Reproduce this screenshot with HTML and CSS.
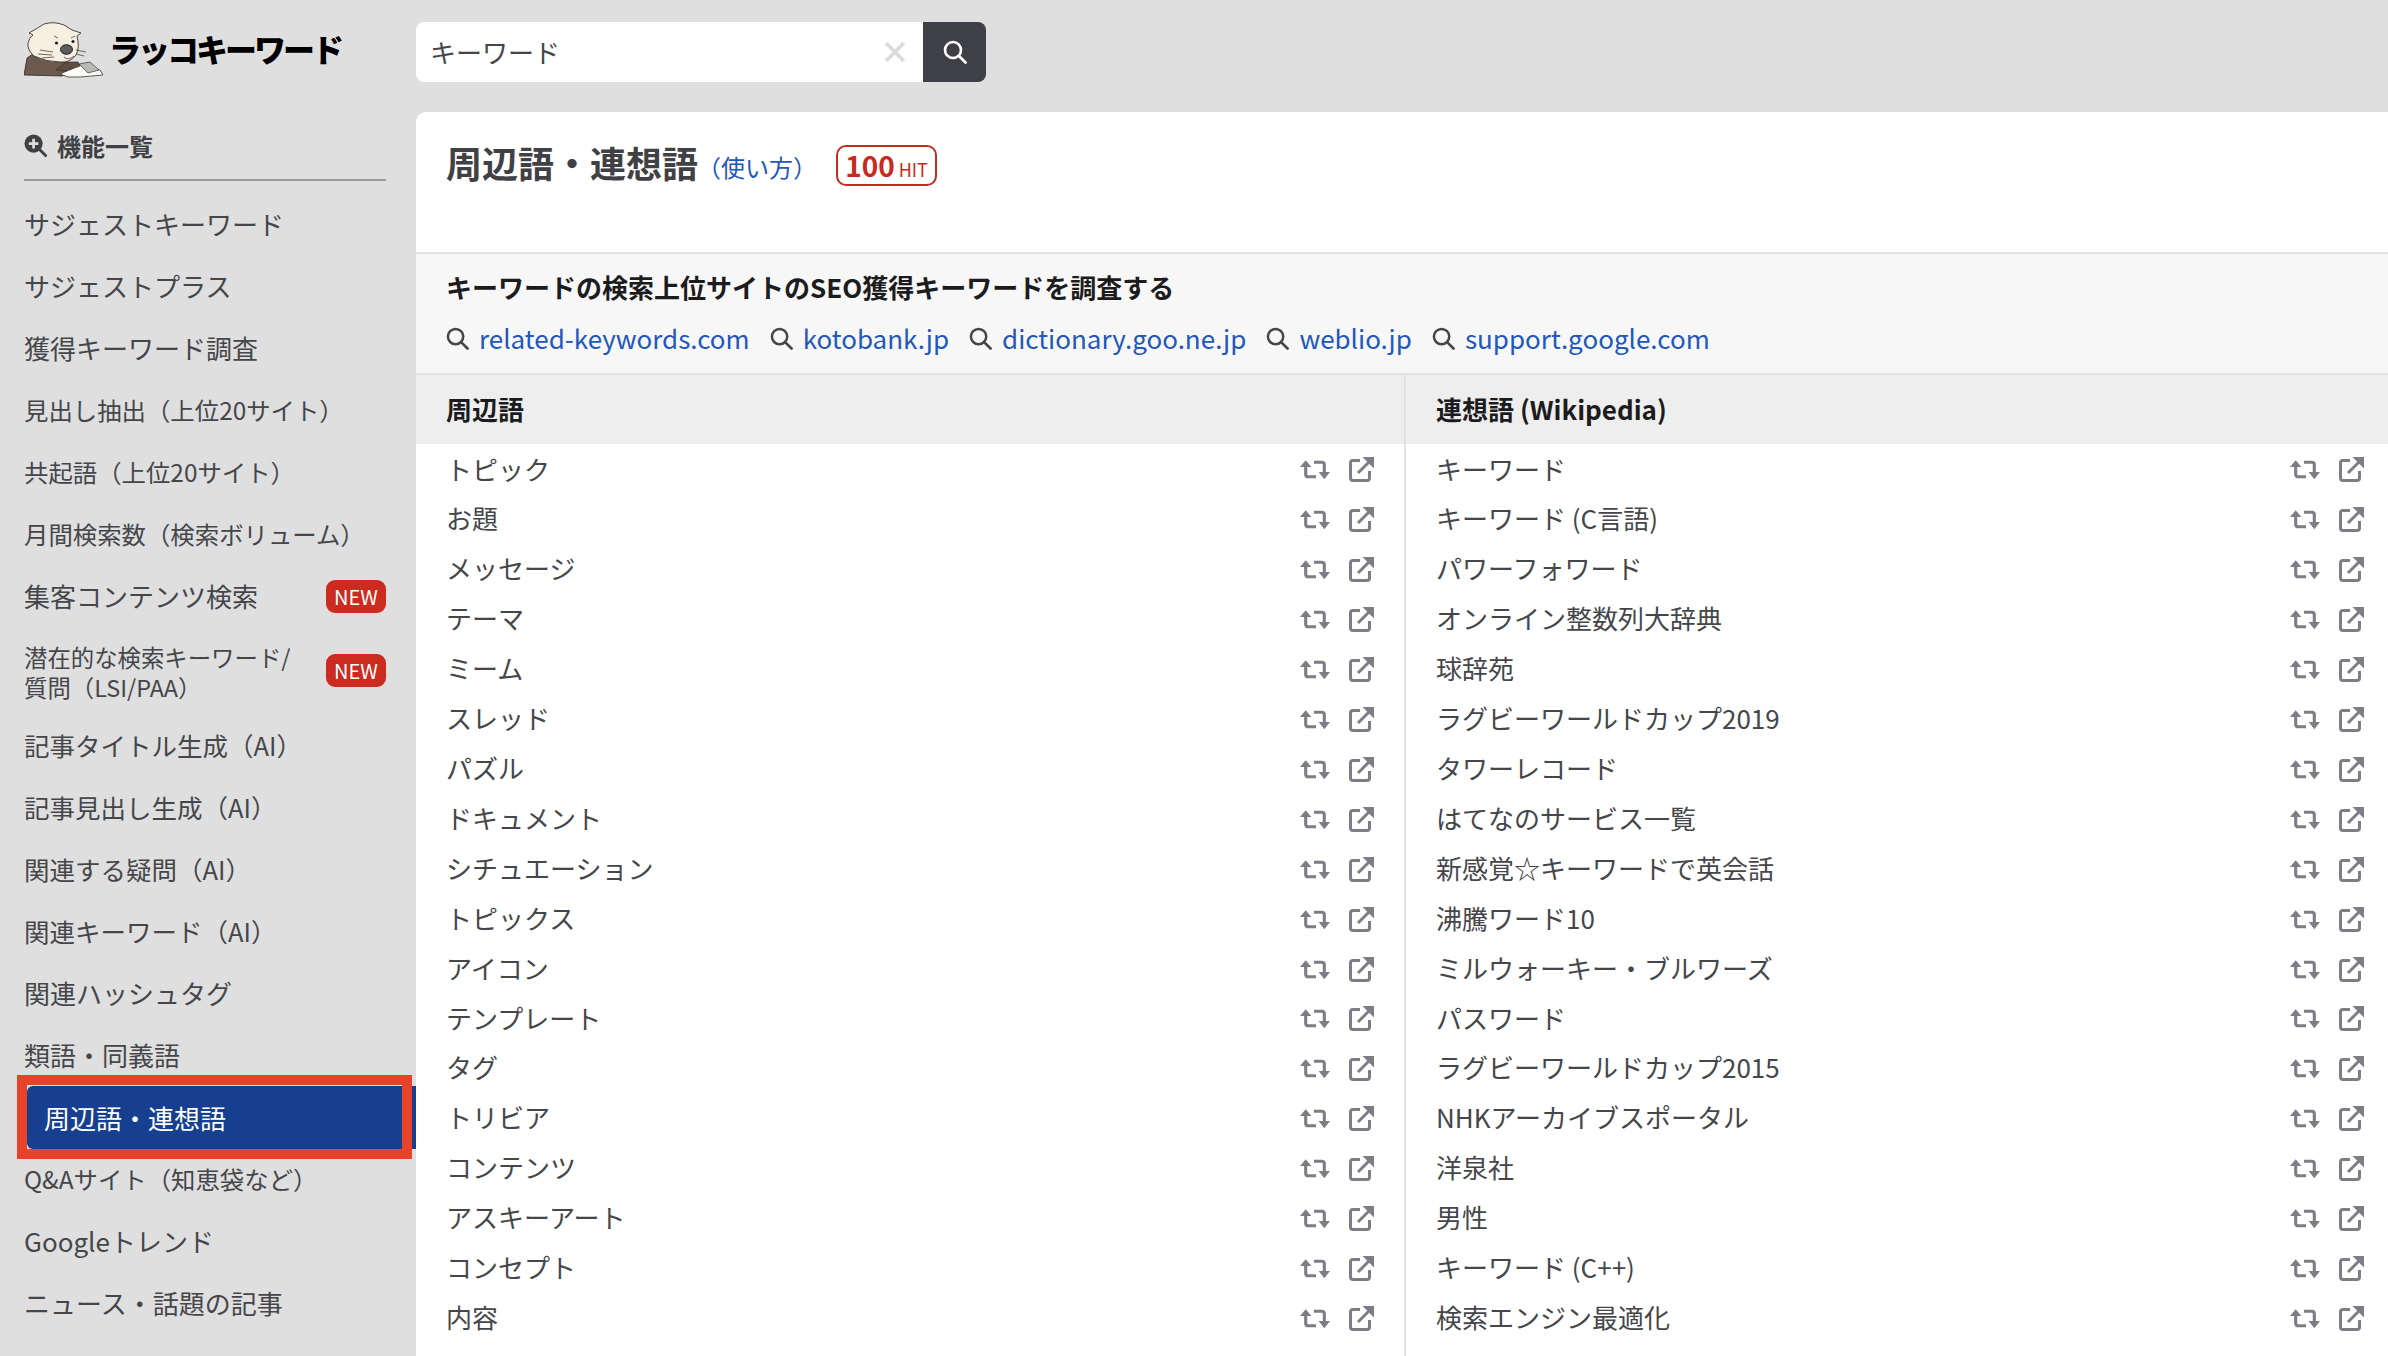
FILE: index.html
```html
<!DOCTYPE html>
<html lang="ja">
<head>
<meta charset="utf-8">
<title>周辺語・連想語 - ラッコキーワード</title>
<link rel="stylesheet" href="styles.css">
</head>
<body>
<svg class="defs" width="0" height="0" aria-hidden="true">
  <symbol id="rt" viewBox="0 0 29 20">
    <path d="M5.5 5V14.5Q5.5 17 8 17H15.5M13.5 3H21Q23.500 3 23.500 5.500V15" fill="none" stroke="currentColor" stroke-width="3"/>
    <path d="M0 7.500L5.500 1L11 7.500ZM18 12.500H29L23.500 19.500Z" fill="currentColor"/>
  </symbol>
  <symbol id="ext" viewBox="0 0 25 25">
    <path d="M11 3.500H4Q1.500 3.500 1.500 6V21Q1.500 23.500 4 23.500H18Q20.500 23.500 20.500 21V14" fill="none" stroke="currentColor" stroke-width="3"/>
    <path d="M9 16L20 5" fill="none" stroke="currentColor" stroke-width="3"/>
    <path d="M13.500 0H25V11.500Z" fill="currentColor"/>
  </symbol>
  <symbol id="lens" viewBox="0 0 24 24">
    <circle cx="10" cy="10" r="8" fill="none" stroke="currentColor" stroke-width="2.600"/>
    <path d="M16 16L22.500 22.500" fill="none" stroke="currentColor" stroke-width="2.800" stroke-linecap="round"/>
  </symbol>
</svg>

<header class="top">
  <a class="brand">
    <svg class="otter" viewBox="24 22 80 56" aria-hidden="true">
      <path d="M24 75L27 58L36 52L62 58L75 70L62 76Z" fill="#6b5a4d" stroke="#2e2a26" stroke-width=".8"/>
      <path d="M29 33L36 29L44 24Q54 21 64 25L72 30L81 33L77 36Q80 48 76 55Q70 63 60 62Q46 62 34 56Q27 50 28 43Q29 38 33 35Z" fill="#f6efe2" stroke="#3a3630" stroke-width=".9"/>
      <ellipse cx="66.500" cy="49.500" rx="6" ry="4.800" fill="#5c5c5c" stroke="#1e1e1e" stroke-width="1"/>
      <circle cx="56.500" cy="43" r="1.600" fill="#222"/>
      <circle cx="73" cy="41.500" r="1.600" fill="#222"/>
      <path d="M54 36L58 38M75 36L71 38M40 50L53 52M38 54L52 55M42 58L54 57M76 50L86 52M76 54L84 56M64 57Q68 61 74 56" fill="none" stroke="#4a4540" stroke-width=".8"/>
      <path d="M60 74L71 69L80 65L100 70L103 75L80 77L68 77Z" fill="#fbfaf6" stroke="#3a3630" stroke-width=".8"/>
      <path d="M79 64L90 62L99 70L88 73Z" fill="#b9b9b7" stroke="#3a3630" stroke-width=".7"/>
      <path d="M56 70L66 62L78 62L80 66L66 71Z" fill="#5e4e42" stroke="#2e2a26" stroke-width=".6"/>
    </svg>
    <span class="brand-name">ラッコキーワード</span>
  </a>
  <form class="search">
    <div class="search-field">
      <span class="search-text">キーワード</span>
      <svg class="search-clear" viewBox="0 0 20 20" aria-hidden="true"><path d="M2 2L18 18M18 2L2 18" stroke="currentColor" stroke-width="3.600" fill="none"/></svg>
    </div>
    <div class="search-btn"><svg class="search-icon" aria-hidden="true"><use href="#lens"/></svg></div>
  </form>
</header>

<div class="layout">
  <aside class="side">
    <div class="side-head">
      <svg class="side-icon" viewBox="0 0 24 24" aria-hidden="true">
        <circle cx="10" cy="10" r="9.500" fill="#3f4045"/>
        <path d="M10 5V15M5 10H15" stroke="#dfdfdf" stroke-width="2.800"/>
        <path d="M16 16L22.500 22.500" stroke="#3f4045" stroke-width="3" stroke-linecap="round"/>
      </svg>
      <span>機能一覧</span>
    </div>
    <ul class="menu">
      <li class="menu-item">サジェストキーワード</li>
      <li class="menu-item">サジェストプラス</li>
      <li class="menu-item">獲得キーワード調査</li>
      <li class="menu-item menu-small">見出し抽出（上位20サイト）</li>
      <li class="menu-item menu-small">共起語（上位20サイト）</li>
      <li class="menu-item menu-small">月間検索数（検索ボリューム）</li>
      <li class="menu-item">集客コンテンツ検索<span class="new">NEW</span></li>
      <li class="menu-item menu-two"><span class="two-text">潜在的な検索キーワード/<br>質問（LSI/PAA）</span><span class="new">NEW</span></li>
      <li class="menu-item menu-ai">記事タイトル生成（AI）</li>
      <li class="menu-item menu-ai">記事見出し生成（AI）</li>
      <li class="menu-item menu-ai">関連する疑問（AI）</li>
      <li class="menu-item menu-ai">関連キーワード（AI）</li>
      <li class="menu-item">関連ハッシュタグ</li>
      <li class="menu-item">類語・同義語</li>
      <li class="menu-item menu-active">周辺語・連想語<span class="highlight"></span></li>
      <li class="menu-item menu-small">Q&amp;Aサイト（知恵袋など）</li>
      <li class="menu-item">Googleトレンド</li>
      <li class="menu-item">ニュース・話題の記事</li>
    </ul>
  </aside>

  <main class="main">
    <section class="title-block">
      <h1 class="title">周辺語・連想語</h1>
      <a class="howto">（使い方）</a>
      <span class="hit"><b>100</b> HIT</span>
    </section>
    <section class="band">
      <h2 class="band-title">キーワードの検索上位サイトのSEO獲得キーワードを調査する</h2>
      <div class="sites">
        <a class="site"><svg class="site-icon" aria-hidden="true"><use href="#lens"/></svg><span>related-keywords.com</span></a>
        <a class="site"><svg class="site-icon" aria-hidden="true"><use href="#lens"/></svg><span>kotobank.jp</span></a>
        <a class="site"><svg class="site-icon" aria-hidden="true"><use href="#lens"/></svg><span>dictionary.goo.ne.jp</span></a>
        <a class="site"><svg class="site-icon" aria-hidden="true"><use href="#lens"/></svg><span>weblio.jp</span></a>
        <a class="site"><svg class="site-icon" aria-hidden="true"><use href="#lens"/></svg><span>support.google.com</span></a>
      </div>
    </section>
    <section class="cols">
      <div class="col col-left">
        <h3 class="col-head">周辺語</h3>
        <ul class="rows">
          <li class="row"><span>トピック</span><svg class="i-rt"><use href="#rt"/></svg><svg class="i-ext"><use href="#ext"/></svg></li>
          <li class="row"><span>お題</span><svg class="i-rt"><use href="#rt"/></svg><svg class="i-ext"><use href="#ext"/></svg></li>
          <li class="row"><span>メッセージ</span><svg class="i-rt"><use href="#rt"/></svg><svg class="i-ext"><use href="#ext"/></svg></li>
          <li class="row"><span>テーマ</span><svg class="i-rt"><use href="#rt"/></svg><svg class="i-ext"><use href="#ext"/></svg></li>
          <li class="row"><span>ミーム</span><svg class="i-rt"><use href="#rt"/></svg><svg class="i-ext"><use href="#ext"/></svg></li>
          <li class="row"><span>スレッド</span><svg class="i-rt"><use href="#rt"/></svg><svg class="i-ext"><use href="#ext"/></svg></li>
          <li class="row"><span>パズル</span><svg class="i-rt"><use href="#rt"/></svg><svg class="i-ext"><use href="#ext"/></svg></li>
          <li class="row"><span>ドキュメント</span><svg class="i-rt"><use href="#rt"/></svg><svg class="i-ext"><use href="#ext"/></svg></li>
          <li class="row"><span>シチュエーション</span><svg class="i-rt"><use href="#rt"/></svg><svg class="i-ext"><use href="#ext"/></svg></li>
          <li class="row"><span>トピックス</span><svg class="i-rt"><use href="#rt"/></svg><svg class="i-ext"><use href="#ext"/></svg></li>
          <li class="row"><span>アイコン</span><svg class="i-rt"><use href="#rt"/></svg><svg class="i-ext"><use href="#ext"/></svg></li>
          <li class="row"><span>テンプレート</span><svg class="i-rt"><use href="#rt"/></svg><svg class="i-ext"><use href="#ext"/></svg></li>
          <li class="row"><span>タグ</span><svg class="i-rt"><use href="#rt"/></svg><svg class="i-ext"><use href="#ext"/></svg></li>
          <li class="row"><span>トリビア</span><svg class="i-rt"><use href="#rt"/></svg><svg class="i-ext"><use href="#ext"/></svg></li>
          <li class="row"><span>コンテンツ</span><svg class="i-rt"><use href="#rt"/></svg><svg class="i-ext"><use href="#ext"/></svg></li>
          <li class="row"><span>アスキーアート</span><svg class="i-rt"><use href="#rt"/></svg><svg class="i-ext"><use href="#ext"/></svg></li>
          <li class="row"><span>コンセプト</span><svg class="i-rt"><use href="#rt"/></svg><svg class="i-ext"><use href="#ext"/></svg></li>
          <li class="row"><span>内容</span><svg class="i-rt"><use href="#rt"/></svg><svg class="i-ext"><use href="#ext"/></svg></li>
        </ul>
      </div>
      <div class="col col-right">
        <h3 class="col-head">連想語 (Wikipedia)</h3>
        <ul class="rows">
          <li class="row"><span>キーワード</span><svg class="i-rt"><use href="#rt"/></svg><svg class="i-ext"><use href="#ext"/></svg></li>
          <li class="row"><span>キーワード (C言語)</span><svg class="i-rt"><use href="#rt"/></svg><svg class="i-ext"><use href="#ext"/></svg></li>
          <li class="row"><span>パワーフォワード</span><svg class="i-rt"><use href="#rt"/></svg><svg class="i-ext"><use href="#ext"/></svg></li>
          <li class="row"><span>オンライン整数列大辞典</span><svg class="i-rt"><use href="#rt"/></svg><svg class="i-ext"><use href="#ext"/></svg></li>
          <li class="row"><span>球辞苑</span><svg class="i-rt"><use href="#rt"/></svg><svg class="i-ext"><use href="#ext"/></svg></li>
          <li class="row"><span>ラグビーワールドカップ2019</span><svg class="i-rt"><use href="#rt"/></svg><svg class="i-ext"><use href="#ext"/></svg></li>
          <li class="row"><span>タワーレコード</span><svg class="i-rt"><use href="#rt"/></svg><svg class="i-ext"><use href="#ext"/></svg></li>
          <li class="row"><span>はてなのサービス一覧</span><svg class="i-rt"><use href="#rt"/></svg><svg class="i-ext"><use href="#ext"/></svg></li>
          <li class="row"><span>新感覚☆キーワードで英会話</span><svg class="i-rt"><use href="#rt"/></svg><svg class="i-ext"><use href="#ext"/></svg></li>
          <li class="row"><span>沸騰ワード10</span><svg class="i-rt"><use href="#rt"/></svg><svg class="i-ext"><use href="#ext"/></svg></li>
          <li class="row"><span>ミルウォーキー・ブルワーズ</span><svg class="i-rt"><use href="#rt"/></svg><svg class="i-ext"><use href="#ext"/></svg></li>
          <li class="row"><span>パスワード</span><svg class="i-rt"><use href="#rt"/></svg><svg class="i-ext"><use href="#ext"/></svg></li>
          <li class="row"><span>ラグビーワールドカップ2015</span><svg class="i-rt"><use href="#rt"/></svg><svg class="i-ext"><use href="#ext"/></svg></li>
          <li class="row"><span>NHKアーカイブスポータル</span><svg class="i-rt"><use href="#rt"/></svg><svg class="i-ext"><use href="#ext"/></svg></li>
          <li class="row"><span>洋泉社</span><svg class="i-rt"><use href="#rt"/></svg><svg class="i-ext"><use href="#ext"/></svg></li>
          <li class="row"><span>男性</span><svg class="i-rt"><use href="#rt"/></svg><svg class="i-ext"><use href="#ext"/></svg></li>
          <li class="row"><span>キーワード (C++)</span><svg class="i-rt"><use href="#rt"/></svg><svg class="i-ext"><use href="#ext"/></svg></li>
          <li class="row"><span>検索エンジン最適化</span><svg class="i-rt"><use href="#rt"/></svg><svg class="i-ext"><use href="#ext"/></svg></li>
        </ul>
      </div>
    </section>
  </main>
</div>
</body>
</html>
```

FILE: styles.css
```css
* { box-sizing: border-box; }
html, body { height: 100%; }
body {
  margin: 0;
  height: 1356px;
  overflow: hidden;
  background: #dfdfdf;
  color: #404145;
  font-family: "Noto Sans CJK JP", "Noto Sans", sans-serif;
  font-size: 26px;
  line-height: 1.3;
}
h1, h2, h3, ul { margin: 0; padding: 0; }
ul { list-style: none; }
.defs { position: absolute; }

.top { display: flex; height: 112px; }
.brand { width: 416px; display: flex; align-items: flex-start; padding: 22px 0 0 24px; }
.otter { width: 80px; height: 56px; flex: none; }
.brand-name {
  margin: 8px 0 0 5px;
  font-size: 32px;
  font-weight: 900;
  line-height: 36px;
  color: #000;
  letter-spacing: -3px;
}
.search { display: flex; width: 570px; height: 60px; margin-top: 22px; }
.search-field {
  flex: 1;
  display: flex;
  align-items: center;
  justify-content: space-between;
  padding: 0 17px 0 14px;
  background: #fff;
  border-radius: 8px 0 0 8px;
}
.search-text { font-size: 26px; color: #45464a; }
.search-clear { width: 22px; height: 22px; color: #dcdcdc; }
.search-btn {
  width: 63px;
  display: flex;
  align-items: center;
  justify-content: center;
  background: #3f4045;
  border-radius: 0 8px 8px 0;
}
.search-icon { width: 24px; height: 24px; color: #fff; }

.layout { display: flex; height: 1244px; }
.side { width: 416px; flex: none; }
.side-head {
  display: flex;
  align-items: center;
  gap: 10px;
  height: 69px;
  margin: 0 30px 0 24px;
  border-bottom: 2px solid #999;
  font-size: 24px;
  font-weight: 700;
  color: #404145;
}
.side-icon { width: 23px; height: 23px; flex: none; }
.menu { margin-top: 12px; }
.menu-item {
  position: relative;
  display: flex;
  align-items: center;
  justify-content: space-between;
  height: 62px;
  padding: 0 30px 0 24px;
  font-size: 26px;
  color: #45464a;
  line-height: 30px;
}
.menu-small { font-size: 24.4px; }
.menu-ai { font-size: 25.5px; }
.menu-two { height: 87px; font-size: 23.4px; }
.two-text { display: block; padding-top: 3px; }
.new {
  flex: none;
  width: 60px;
  height: 33px;
  border-radius: 9px;
  background: #cc2b1f;
  color: #fff;
  font-size: 20px;
  font-weight: 400;
  line-height: 33px;
  text-align: center;
}
.menu-active {
  height: 63px;
  margin: 0 0 -1px 27px;
  padding-left: 17px;
  background: #173f8f;
  border-radius: 6px 0 0 6px;
  color: #fff;
}
.highlight {
  position: absolute;
  left: -10px;
  right: 4px;
  top: -11px;
  bottom: -10px;
  border: 10px solid #e8432a;
}

.main {
  flex: 1;
  display: flex;
  flex-direction: column;
  background: #fff;
  border-radius: 10px 0 0 0;
}
.title-block {
  display: flex;
  align-items: center;
  height: 142px;
  padding: 18px 0 52px 30px;
  border-bottom: 2px solid #e2e2e2;
}
.title { margin-bottom: 6px; font-size: 36px; font-weight: 700; color: #404145; line-height: 72px; }
.howto { margin: 4px 0 0 -1px; font-size: 24px; color: #2257bb; }
.hit {
  margin-left: 19px;
  width: 101px;
  height: 41px;
  border: 2px solid #c72a1f;
  border-radius: 10px;
  color: #c72a1f;
  font-size: 18px;
  line-height: 36px;
  text-align: center;
  white-space: nowrap;
}
.hit b { font-size: 28px; font-weight: 700; }

.band {
  height: 121px;
  padding: 15px 30px 0;
  background: #f7f7f7;
  border-bottom: 2px solid #e2e2e2;
}
.band-title { font-size: 26px; font-weight: 700; color: #1c1c1e; line-height: 36px; }
.sites { display: flex; gap: 20px; margin-top: 15px; }
.site { display: flex; align-items: center; gap: 10px; color: #2257bb; font-size: 26px; line-height: 36px; }
.site-icon { width: 23px; height: 23px; color: #45464a; }

.cols { flex: 1; display: flex; }
.col { flex: 1; min-width: 0; }
.col-left { flex: none; width: 990px; border-right: 2px solid #e2e2e2; }
.col-head {
  height: 69px;
  padding: 0 30px;
  background: #eeeeee;
  font-size: 26px;
  font-weight: 700;
  color: #1c1c1e;
  line-height: 67px;
}
.row {
  display: flex;
  align-items: center;
  height: 49.92px;
  padding: 0 30px 1px;
  font-size: 26px;
  color: #45464a;
}
.col-right .row { padding-right: 24px; }
.row span { flex: 1; }
.i-rt { width: 30px; height: 21px; margin-top: 3px; color: #7d7d86; }
.i-ext { width: 25px; height: 25px; margin: 3px 0 0 19px; color: #7d7d86; }
```
